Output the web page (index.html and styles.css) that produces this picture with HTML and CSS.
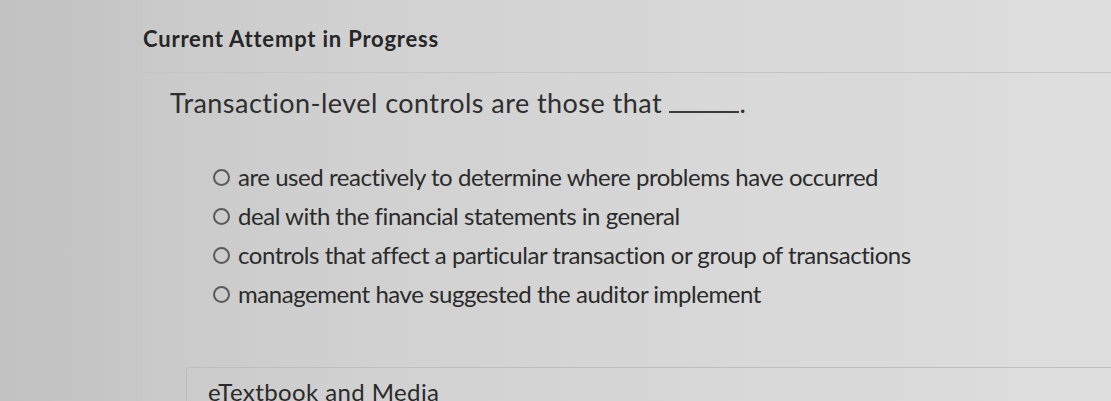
FILE: index.html
```html
<!DOCTYPE html>
<html lang="en">
<head>
<meta charset="utf-8">
<title>Current Attempt in Progress</title>
<link rel="stylesheet" href="styles.css">
</head>
<body>
<div class="page">
  <div class="gutter"></div>
  <main class="main">
    <h1 class="title">Current Attempt in Progress</h1>
    <section class="question">
      <p class="prompt">Transaction-level controls are those that <span class="blank"></span>.</p>
      <ul class="options">
        <li class="option"><span class="radio"></span><span class="label">are used reactively to determine where problems have occurred</span></li>
        <li class="option"><span class="radio"></span><span class="label">deal with the financial statements in general</span></li>
        <li class="option"><span class="radio"></span><span class="label">controls that affect a particular transaction or group of transactions</span></li>
        <li class="option"><span class="radio"></span><span class="label">management have suggested the auditor implement</span></li>
      </ul>
    </section>
    <section class="media">
      <div class="media-box">eTextbook and Media</div>
    </section>
  </main>
</div>
</body>
</html>
```
FILE: styles.css
```css
html, body {
  margin: 0;
  padding: 0;
  height: 100%;
}
body {
  background: linear-gradient(90deg, #c1c2c1 0%, #cdcecd 30%, #d5d6d5 65%, #dcdddc 100%);
  font-family: "Lato", "Liberation Sans", sans-serif;
  color: #2a2a2a;
  overflow: hidden;
}
.page {
  display: flex;
  min-height: 401px;
}
.gutter {
  width: 143px;
  flex: none;
}
.main {
  flex: 1;
  background: rgba(255, 255, 255, 0.05);
}
.title {
  margin: 0;
  padding: 26px 0 20px 0;
  font-size: 22px;
  font-weight: 700;
  letter-spacing: 0.8px;
  line-height: 26px;
  color: #262626;
  border-bottom: 1px solid #c4c5c4;
}
.question {
  padding: 15px 0 0 27px;
}
.prompt {
  margin: 0;
  font-size: 27px;
  letter-spacing: 0.45px;
  line-height: 30px;
  color: #2e2e2e;
}
.blank {
  display: inline-block;
  width: 70px;
  height: 1px;
  margin-left: 0;
  border-bottom: 2px solid #3a3a3a;
  vertical-align: baseline;
}
.options {
  list-style: none;
  margin: 45px 0 0 0;
  padding: 0 0 0 43px;
  display: flex;
  flex-direction: column;
  gap: 11px;
}
.option {
  display: flex;
  align-items: center;
  gap: 8px;
  font-size: 24px;
  letter-spacing: -0.45px;
  line-height: 28px;
  color: #2b2b2b;
}
.radio {
  width: 13px;
  height: 13px;
  flex: none;
  border: 2px solid #5a5a5a;
  border-radius: 50%;
}
.media {
  margin-top: 59px;
  padding-left: 43px;
}
.media-box {
  border-top: 1px solid #bdbebd;
  border-left: 1px solid #bdbebd;
  border-radius: 3px 0 0 0;
  padding: 9px 0 0 21px;
  font-size: 24px;
  letter-spacing: 0.4px;
  line-height: 30px;
  color: #2a2a2a;
  margin-right: -1px;
}
```
